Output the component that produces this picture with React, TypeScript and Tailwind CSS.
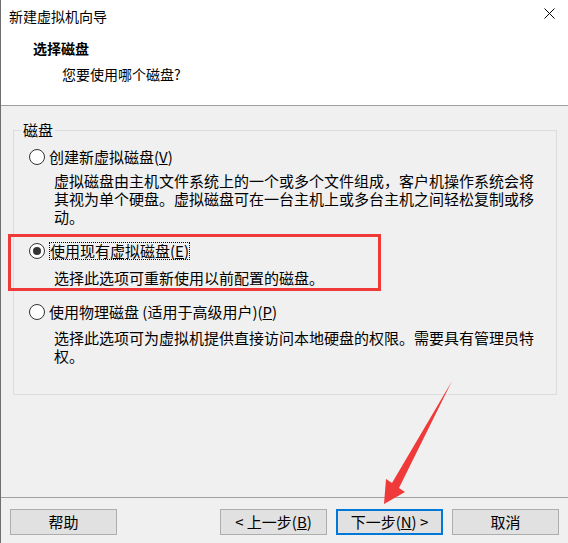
import React from "react";

function Radio({ checked }: { checked?: boolean }) {
  return (
    <span className="w-[16px] h-[16px] rounded-full border border-[#333333] bg-white flex items-center justify-center shrink-0">
      {checked && <span className="w-[8px] h-[8px] rounded-full bg-[#333333]" />}
    </span>
  );
}

function Btn({ children, primary }: { children: React.ReactNode; primary?: boolean }) {
  return (
    <div
      className={
        "w-[107px] h-[26px] flex items-center justify-center bg-[#e1e1e1] text-[15px] leading-[18px] text-black " +
        (primary ? "border-2 border-[#0078d7]" : "border border-[#adadad]")
      }
    >
      {children}
    </div>
  );
}

export default function App() {
  return (
    <div className="relative w-[568px] h-[543px] overflow-hidden bg-[#f0f0f0] border-l border-[#6e6e6e] flex flex-col text-black font-['Noto_Sans_CJK_SC','Noto_Sans',sans-serif]">
      {/* header */}
      <div className="h-[105px] bg-white flex flex-col shrink-0">
        <div className="h-[32px] flex justify-between">
          <span className="mt-[6px] pl-[8px] text-[14px] leading-[20px]">新建虚拟机向导</span>
          <svg className="mt-[8px] mr-[13px]" width="11" height="11" viewBox="0 0 11 11">
            <path d="M0.5 0.5 L10.5 10.5 M10.5 0.5 L0.5 10.5" stroke="#000" strokeWidth="1" />
          </svg>
        </div>
        <div className="mt-[6px] pl-[32px] text-[14px] leading-[20px] font-bold">选择磁盘</div>
        <div className="mt-[6px] pl-[61px] text-[14px] leading-[20px]">您要使用哪个磁盘?</div>
      </div>
      <div className="h-px bg-[#a0a0a0] shrink-0" />

      {/* body */}
      <div className="flex-1 flex flex-col">
        <fieldset className="mt-[15px] ml-[12px] w-[544px] h-[274px] border border-[#dcdcdc] p-0 m-0">
          <legend className="ml-[7px] px-[2px] text-[15px] leading-[18px]">磁盘</legend>
          <div className="pt-[9px] flex flex-col text-[15px] leading-[18px]">
            <div className="h-[18px] flex items-center pl-[15px]">
              <Radio />
              <span className="ml-[4px] leading-[18px]">
                创建新虚拟磁盘(<span className="underline">V</span>)
              </span>
            </div>
            <div className="mt-[6px] pl-[40px] whitespace-nowrap">
              虚拟磁盘由主机文件系统上的一个或多个文件组成，客户机操作系统会将
              <br />
              其视为单个硬盘。虚拟磁盘可在一台主机上或多台主机之间轻松复制或移
              <br />
              动。
            </div>
            <div className="mt-[16px] h-[18px] flex items-center pl-[15px]">
              <Radio checked />
              <span className="ml-[4px] leading-[16px] border border-dotted border-black">
                使用现有虚拟磁盘(<span className="underline">E</span>)
              </span>
            </div>
            <div className="mt-[9px] pl-[40px] whitespace-nowrap">选择此选项可重新使用以前配置的磁盘。</div>
            <div className="mt-[16px] h-[18px] flex items-center pl-[15px]">
              <Radio />
              <span className="ml-[4px] leading-[18px]">
                使用物理磁盘 (适用于高级用户)(<span className="underline">P</span>)
              </span>
            </div>
            <div className="mt-[8px] pl-[40px] whitespace-nowrap">
              选择此选项可为虚拟机提供直接访问本地硬盘的权限。需要具有管理员特
              <br />
              权。
            </div>
          </div>
        </fieldset>
      </div>

      <div className="h-px bg-[#a0a0a0] shrink-0" />
      {/* footer */}
      <div className="h-[45px] shrink-0 pt-[11px] pl-[9px] pr-[9px] flex items-start">
        <Btn>帮助</Btn>
        <div className="flex-1" />
        <div className="flex gap-[9px]">
          <Btn>
            &lt; 上一步(<span className="underline">B</span>)
          </Btn>
          <Btn primary>
            下一步(<span className="underline">N</span>) &gt;
          </Btn>
          <Btn>取消</Btn>
        </div>
      </div>

      {/* annotation overlays */}
      <div className="absolute left-[7px] top-[234px] w-[373px] h-[57px] border-[3px] border-[#f03a3a] pointer-events-none" />
      <svg className="absolute left-0 top-0 pointer-events-none" width="568" height="543" viewBox="0 0 568 543">
        <polygon points="451,381 398,488 404,492 383,504 385,479 391,483" fill="#f03a3a" />
      </svg>
    </div>
  );
}
